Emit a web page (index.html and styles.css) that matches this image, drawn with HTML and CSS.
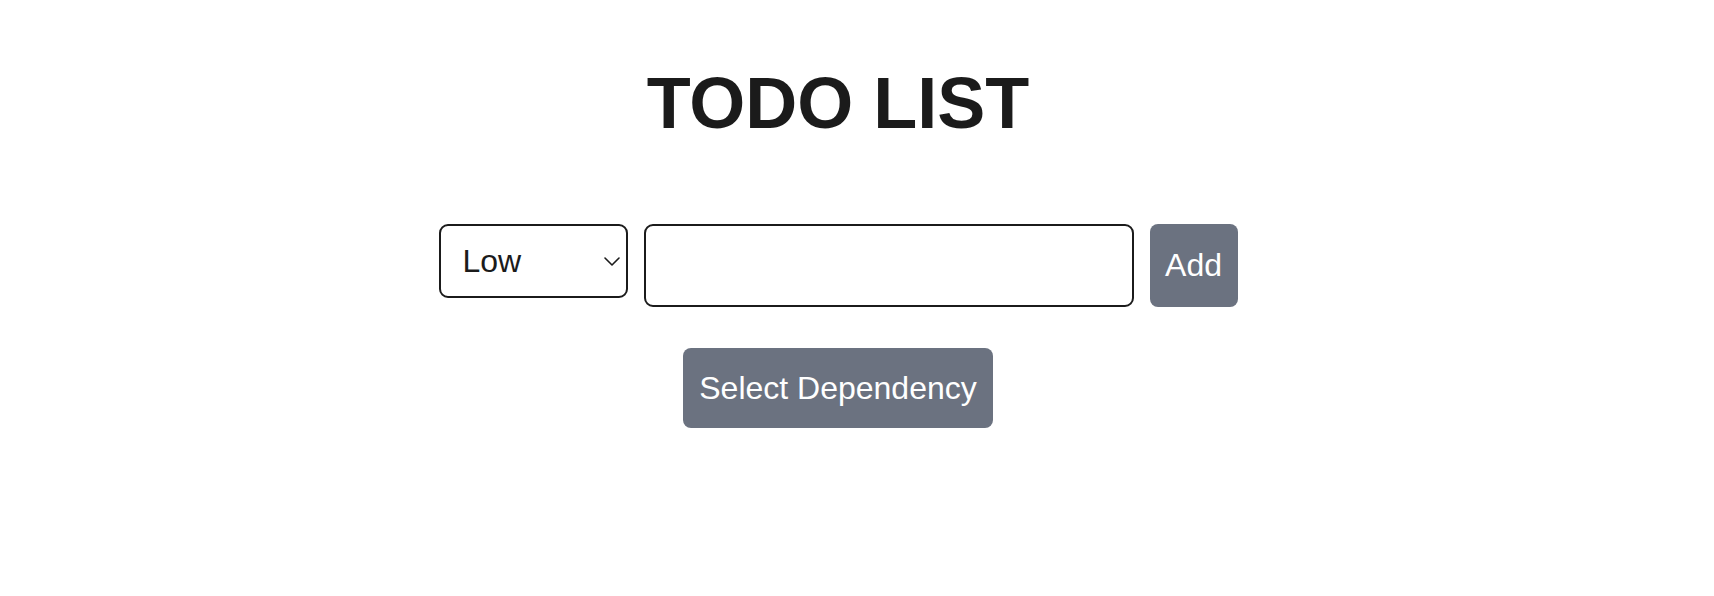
FILE: index.html
```html
<!DOCTYPE html>
<html lang="en">
<head>
<meta charset="utf-8">
<title>Todo List</title>
<link rel="stylesheet" href="styles.css">
</head>
<body>
<main class="app">
  <h1 class="title">TODO LIST</h1>
  <div class="entry-row">
    <div class="select-wrap">
      <select class="priority">
        <option>Low</option>
        <option>Medium</option>
        <option>High</option>
      </select>
      <svg class="chevron" width="16" height="9" viewBox="0 0 16 9" aria-hidden="true">
        <path d="M1 1 L8 8 L15 1" fill="none" stroke="#1b1b1b" stroke-width="1.6" stroke-linecap="round" stroke-linejoin="round"/>
      </svg>
    </div>
    <input class="task-input" type="text">
    <button class="btn btn-add">Add</button>
  </div>
  <button class="btn btn-dep">Select Dependency</button>
</main>
</body>
</html>
```

FILE: styles.css
```css
* {
  box-sizing: border-box;
}

body {
  margin: 0;
  background: #ffffff;
  font-family: "Liberation Sans", Arial, sans-serif;
  color: #1b1b1b;
}

.app {
  display: flex;
  flex-direction: column;
  align-items: center;
  padding-right: 38px;
}

.title {
  margin: 62px 0 0;
  font-size: 72px;
  font-weight: 700;
  line-height: normal;
  color: #1b1b1b;
}

.entry-row {
  display: flex;
  align-items: flex-start;
  gap: 16px;
  margin-top: 80px;
}

.select-wrap {
  position: relative;
  width: 189px;
  height: 74px;
}

.priority {
  -webkit-appearance: none;
  appearance: none;
  width: 100%;
  height: 100%;
  border: 2px solid #1b1b1b;
  border-radius: 9px;
  background: #ffffff;
  padding: 0 0 0 22px;
  font-family: "Liberation Sans", Arial, sans-serif;
  font-size: 32px;
  color: #1b1b1b;
}

.chevron {
  position: absolute;
  right: 8px;
  top: 33px;
  pointer-events: none;
}

.task-input {
  width: 490px;
  height: 83px;
  border: 2px solid #1b1b1b;
  border-radius: 9px;
  padding: 0 16px;
  font-family: "Liberation Sans", Arial, sans-serif;
  font-size: 32px;
  background: #ffffff;
}

.btn {
  border: none;
  border-radius: 8px;
  background: #6b7280;
  color: #ffffff;
  font-family: "Liberation Sans", Arial, sans-serif;
  font-size: 32px;
  line-height: normal;
  padding: 0;
}

.btn-add {
  width: 88px;
  height: 83px;
}

.btn-dep {
  margin-top: 41px;
  height: 80px;
  width: 310px;
}
```
